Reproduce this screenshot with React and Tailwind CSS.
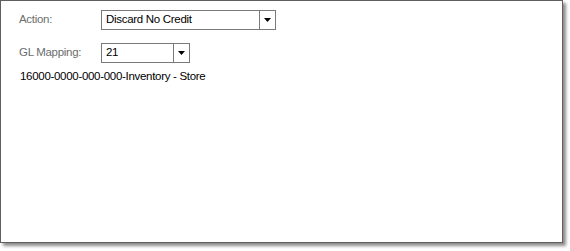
function Combo({ value, width }) {
  return (
    <div className="flex h-[20px] border border-[#7a7a7a] bg-white" style={{ width }}>
      <div className="flex flex-1 items-center pl-[4px] text-black">{value}</div>
      <div className="flex w-[16px] items-center justify-center border-l border-[#7a7a7a]">
        <svg width="7" height="4" viewBox="0 0 7 4">
          <polygon points="0,0 7,0 3.5,4" fill="#000" />
        </svg>
      </div>
    </div>
  );
}

export default function App() {
  return (
    <div className="h-[251px] w-[570px] bg-white font-['Liberation_Sans',Arial,sans-serif] text-[11.5px] tracking-[-0.3px]">
      <div className="h-[243px] w-[563px] border border-[#5f5f5f] bg-white shadow-[3px_3px_3px_rgba(0,0,0,0.45)]">
        <div className="flex items-center pt-[9px]">
          <div className="w-[100px] shrink-0 whitespace-nowrap pl-[18px] text-[#6d6d6d]">Action:</div>
          <Combo value="Discard No Credit" width={175} />
        </div>
        <div className="mt-[13px] flex items-center">
          <div className="w-[100px] shrink-0 whitespace-nowrap pl-[18px] text-[#6d6d6d]">GL Mapping:</div>
          <Combo value="21" width={89} />
        </div>
        <div className="mt-[5px] pl-[19px] text-black">16000-0000-000-000-Inventory - Store</div>
      </div>
    </div>
  );
}
